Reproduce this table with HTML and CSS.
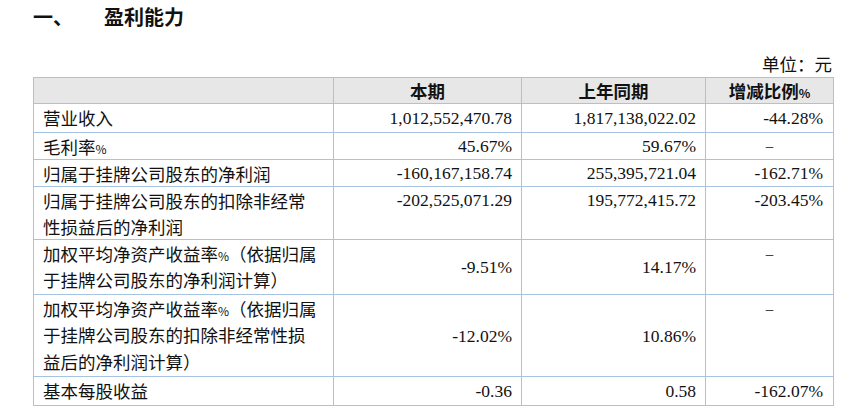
FILE: index.html
```html
<!DOCTYPE html>
<html lang="zh-CN">
<head>
<meta charset="utf-8">
<title>盈利能力</title>
<link rel="stylesheet" href="styles.css">
</head>
<body>
<div class="page">
  <h2 class="title"><span class="num">一、</span><span>盈利能力</span></h2>
  <div class="unit">单位：元</div>
  <table class="fin">
    <colgroup>
      <col class="c1"><col class="c2"><col class="c3"><col class="c4">
    </colgroup>
    <thead>
      <tr class="r-head">
        <th></th><th>本期</th><th>上年同期</th><th>增减比例<span class="pct">%</span></th>
      </tr>
    </thead>
    <tbody>
      <tr class="r1 first">
        <td class="lbl">营业收入</td><td class="n">1,012,552,470.78</td><td class="n">1,817,138,022.02</td><td class="n last">-44.28%</td>
      </tr>
      <tr class="r1">
        <td class="lbl">毛利率<span class="pct">%</span></td><td class="n">45.67%</td><td class="n">59.67%</td><td class="dash mid">–</td>
      </tr>
      <tr class="r1">
        <td class="lbl">归属于挂牌公司股东的净利润</td><td class="n">-160,167,158.74</td><td class="n">255,395,721.04</td><td class="n last">-162.71%</td>
      </tr>
      <tr class="r2">
        <td class="lbl">归属于挂牌公司股东的扣除非经常性损益后的净利润</td><td class="n top">-202,525,071.29</td><td class="n top">195,772,415.72</td><td class="n last top">-203.45%</td>
      </tr>
      <tr class="r2b">
        <td class="lbl">加权平均净资产收益率<span class="pct">%</span>（依据归属于挂牌公司股东的净利润计算）</td><td class="n">-9.51%</td><td class="n">14.17%</td><td class="dash top">–</td>
      </tr>
      <tr class="r3">
        <td class="lbl">加权平均净资产收益率<span class="pct">%</span>（依据归属于挂牌公司股东的扣除非经常性损益后的净利润计算）</td><td class="n">-12.02%</td><td class="n">10.86%</td><td class="dash top">–</td>
      </tr>
      <tr class="r1 lastrow">
        <td class="lbl">基本每股收益</td><td class="n">-0.36</td><td class="n">0.58</td><td class="n last">-162.07%</td>
      </tr>
    </tbody>
  </table>
</div>
</body>
</html>
```

FILE: styles.css
```css
html, body {
  margin: 0;
  padding: 0;
  background: #ffffff;
}

.page {
  padding-left: 33px;
  width: 800px;
  color: #111111;
  font-family: "Liberation Serif", "Noto Sans CJK SC", serif;
}

.title {
  margin: 0;
  height: 34px;
  line-height: 34px;
  font-family: "Noto Sans CJK SC", sans-serif;
  font-size: 20px;
  font-weight: 700;
  display: flex;
  gap: 31px;
}

.unit {
  padding-top: 17px;
  height: 26px;
  line-height: 26px;
  text-align: right;
  font-family: "Noto Sans CJK SC", sans-serif;
  font-size: 17.5px;
  margin-right: 1px;
}

.fin {
  border-collapse: collapse;
  table-layout: fixed;
  width: 800px;
  font-size: 17.5px;
}

.c1 { width: 300px; }
.c2 { width: 188px; }
.c3 { width: 184px; }
.c4 { width: 128px; }

.fin th,
.fin td {
  border: 1px solid #a7c3e2;
  padding: 0;
}

.fin th {
  background: #e7e7e7;
  height: 25px;
  line-height: 25px;
  font-family: "Noto Sans CJK SC", sans-serif;
  font-weight: 700;
  font-size: 17.5px;
  text-align: center;
}

.fin td {
  vertical-align: middle;
}

/* single-line rows: pitch 27 (28 for first/last) */
.r1 td { line-height: 25px; }
.r1.first td,
.r1.lastrow td { height: 27px; }

/* two-line rows */
.r2 td { line-height: 25.5px; }
.r2b td { line-height: 26px; height: 53px; }

/* three-line row */
.r3 td { line-height: 26px; height: 80px; }
.r3 td.lbl { line-height: 26.3px; }

.fin td.lbl {
  font-family: "Noto Sans CJK SC", sans-serif;
  padding-left: 9px;
  padding-right: 14px;
  padding-top: 1px;
  text-align: left;
  vertical-align: top;
}

.pct {
  font-size: 12px;
  line-height: 1;
}

.fin td.n {
  text-align: right;
  padding-right: 9px;
}

.fin td.n.last {
  padding-right: 10px;
}

.fin td.top {
  vertical-align: top;
  padding-top: 1px;
}

.fin td.dash {
  text-align: center;
  font-size: 15px;
}

.fin td.dash.mid {
  vertical-align: middle;
}
```
